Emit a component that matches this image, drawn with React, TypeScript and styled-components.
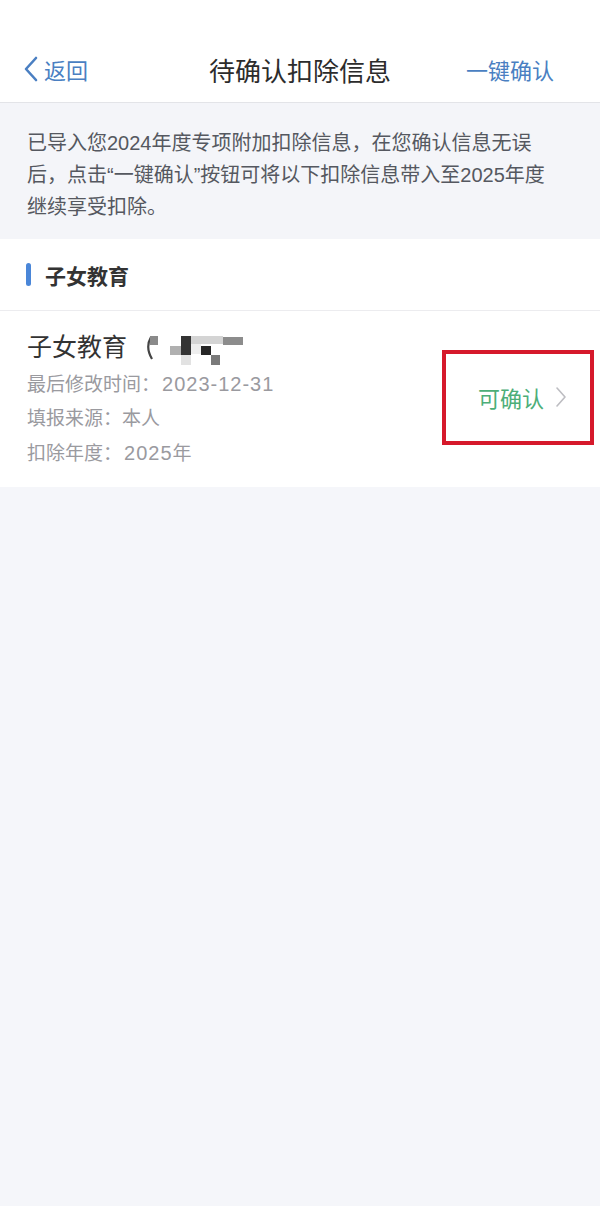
import React from "react";
import styled, { createGlobalStyle } from "styled-components";

const GlobalStyle = createGlobalStyle`
  html, body {
    margin: 0;
    padding: 0;
    background: #f5f6fa;
    font-family: "Liberation Sans", "Noto Sans CJK SC", sans-serif;
  }
`;

const Page = styled.div`
  min-height: 1206px;
  background: #f5f6fa;
`;

const NavBar = styled.div`
  height: 103px;
  box-sizing: border-box;
  padding: 36px 22px 0;
  background: #ffffff;
  border-bottom: 1px solid #e3e4e8;
  display: grid;
  grid-template-columns: 1fr auto 1fr;
  align-items: center;
`;

const BackLink = styled.div`
  display: flex;
  align-items: center;
  gap: 4px;
  color: #4a7fc2;
  font-size: 22px;
`;

const NavTitle = styled.div`
  font-size: 26px;
  color: #2c2c2c;
`;

const NavAction = styled.div`
  text-align: right;
  padding-right: 24px;
  color: #4a7fc2;
  font-size: 22px;
`;

const Notice = styled.div`
  padding: 24px 20px 16px 27px;
  color: #555860;
  font-size: 20px;
  line-height: 32px;
  background: #f4f5f9;
`;

const SectionHeader = styled.div`
  height: 72px;
  box-sizing: border-box;
  background: #ffffff;
  border-bottom: 1px solid #ececef;
  display: flex;
  align-items: center;
  gap: 14px;
  padding-left: 26px;
`;

const SectionBar = styled.span`
  width: 5px;
  height: 23px;
  border-radius: 3px;
  background: #4a86d8;
`;

const SectionTitle = styled.span`
  font-size: 21px;
  font-weight: 700;
  color: #333333;
`;

const Card = styled.div`
  height: 176px;
  box-sizing: border-box;
  background: #ffffff;
  display: flex;
  align-items: center;
  justify-content: space-between;
  padding: 0 6px 0 27px;
`;

const Info = styled.div`
  display: flex;
  flex-direction: column;
`;

const ItemTitle = styled.div`
  display: flex;
  align-items: center;
  gap: 18px;
  font-size: 25px;
  color: #333333;
  line-height: 34px;
`;

const MosaicWrap = styled.span`
  display: flex;
  margin-top: 8px;
`;

const Meta = styled.div`
  font-size: 19px;
  color: #9a9a9f;
  line-height: 34px;
`;

const Num = styled.span`
  font-size: 20px;
  letter-spacing: 1px;
  margin-left: 2px;
`;

const HighlightBox = styled.div`
  width: 152px;
  height: 95px;
  box-sizing: border-box;
  border: 4px solid #d6192b;
  display: flex;
  align-items: center;
  gap: 10px;
  padding-left: 32px;
  margin-top: -4px;
`;

const StatusText = styled.span`
  font-size: 22px;
  color: #4cae78;
`;

const Mosaic = () => (
  <svg width="100" height="32" viewBox="0 0 100 32">
    <path d="M6 2 Q0 12 7 24" stroke="#444" strokeWidth="2.2" fill="none" />
    <rect x="5" y="1" width="8" height="9" fill="#8a8a8a" />
    <rect x="25" y="11" width="11" height="9" fill="#b0b0b0" />
    <rect x="36" y="1" width="10" height="19" fill="#333" />
    <rect x="46" y="1" width="32" height="8" fill="#d4d4d4" />
    <rect x="78" y="2" width="20" height="8" fill="#8c8c8c" />
    <rect x="36" y="20" width="10" height="10" fill="#e2e2e2" />
    <rect x="56" y="11" width="10" height="9" fill="#262626" />
    <rect x="66" y="20" width="9" height="10" fill="#7a7a7a" />
    <rect x="46" y="9" width="10" height="10" fill="#eeeeee" />
  </svg>
);

export default function App() {
  return (
    <Page>
      <GlobalStyle />
      <NavBar>
        <BackLink>
          <svg width="18" height="28" viewBox="0 0 18 28">
            <path d="M14 3 L4 14 L14 25" stroke="#4a7fc2" strokeWidth="2.6" fill="none" strokeLinecap="round" strokeLinejoin="round" />
          </svg>
          返回
        </BackLink>
        <NavTitle>待确认扣除信息</NavTitle>
        <NavAction>一键确认</NavAction>
      </NavBar>
      <Notice>
        已导入您2024年度专项附加扣除信息，在您确认信息无误
        <br />
        后，点击“一键确认”按钮可将以下扣除信息带入至2025年度
        <br />
        继续享受扣除。
      </Notice>
      <SectionHeader>
        <SectionBar />
        <SectionTitle>子女教育</SectionTitle>
      </SectionHeader>
      <Card>
        <Info>
          <ItemTitle>
            子女教育
            <MosaicWrap>
              <Mosaic />
            </MosaicWrap>
          </ItemTitle>
          <Meta>
            最后修改时间：<Num>2023-12-31</Num>
          </Meta>
          <Meta>填报来源：本人</Meta>
          <Meta>
            扣除年度：<Num>2025</Num>年
          </Meta>
        </Info>
        <HighlightBox>
          <StatusText>可确认</StatusText>
          <svg width="14" height="24" viewBox="0 0 14 24">
            <path d="M3 3 L11 12 L3 21" stroke="#bdbdc2" strokeWidth="1.6" fill="none" strokeLinecap="round" strokeLinejoin="round" />
          </svg>
        </HighlightBox>
      </Card>
    </Page>
  );
}
